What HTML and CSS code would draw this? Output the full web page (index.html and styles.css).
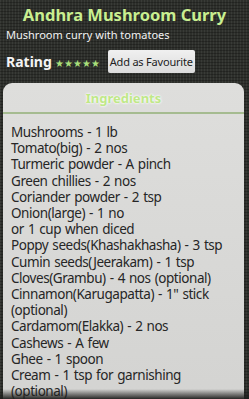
FILE: index.html
```html
<!DOCTYPE html>
<html>

<head>
    <title>Andhra Mushroom Curry</title>
    <link rel="stylesheet" href="styles.css">
</head>

<body>
    <h1 class="title">Andhra Mushroom Curry</h1>
    <div class="subtitle">Mushroom curry with tomatoes</div>

    <div class="rating-row">
        <span class="rating-label">Rating</span>
        <span class="stars">&#9733;&#9733;&#9733;&#9733;&#9733;</span>
        <button class="fav-btn">Add as Favourite</button>
    </div>

    <div class="panel">
        <div class="panel-head">Ingredients</div>
        <div class="ingredients">
            <div>Mushrooms - 1 lb</div>
            <div>Tomato(big) - 2 nos</div>
            <div>Turmeric powder - A pinch</div>
            <div>Green chillies - 2 nos</div>
            <div>Coriander powder - 2 tsp</div>
            <div>Onion(large) - 1 no<br>or 1 cup when diced</div>
            <div>Poppy seeds(Khashakhasha) - 3 tsp</div>
            <div>Cumin seeds(Jeerakam) - 1 tsp</div>
            <div>Cloves(Grambu) - 4 nos (optional)</div>
            <div>Cinnamon(Karugapatta) - 1" stick<br>(optional)</div>
            <div>Cardamom(Elakka) - 2 nos</div>
            <div>Cashews - A few</div>
            <div>Ghee - 1 spoon</div>
            <div>Cream - 1 tsp for garnishing<br>(optional)</div>
        </div>
    </div>

    <div class="bottom-fade"></div>
</body>

</html>
```

FILE: styles.css
```css
html, body {
    height: 100%;
    overflow: hidden;
}

body {
    margin: 0;
    font-family: "Noto Sans", "Open Sans", sans-serif;
    background-color: #2d2f2b;
    background-image:
        repeating-linear-gradient(0deg, rgba(0, 0, 0, 0.25) 0 1px, transparent 1px 3px),
        repeating-linear-gradient(90deg, rgba(255, 255, 255, 0.06) 0 1px, transparent 1px 3px);
}

.title {
    margin: 0;
    padding-top: 2px;
    height: 25px;
    font-size: 16.5px;
    font-weight: bold;
    color: #c9ef90;
    text-align: center;
    line-height: 25px;
}

.subtitle {
    padding-left: 6px;
    font-size: 11px;
    line-height: 16px;
    color: #f2f2f2;
}

.rating-row {
    display: flex;
    align-items: center;
    padding: 6px 0 0 6px;
    height: 24px;
}

.rating-label {
    font-size: 14px;
    font-weight: bold;
    color: #f4f4f4;
}

.stars {
    margin-left: 3px;
    margin-top: 3px;
    font-size: 10px;
    color: #a8df7a;
}

.fav-btn {
    margin-left: 8px;
    height: 23px;
    padding: 0 2px;
    border: none;
    border-radius: 2px;
    background: linear-gradient(#f0f0f0, #dcdcdc);
    font-family: "Noto Sans", sans-serif;
    font-size: 11px;
    letter-spacing: -0.2px;
    color: #222;
}

.panel {
    margin: 10px 5px 0 3px;
    border-radius: 9px 9px 0 0;
    background: linear-gradient(#dededc, #d3d3d1);
    height: 330px;
}

.panel-head {
    height: 29px;
    line-height: 31px;
    text-align: center;
    font-size: 13px;
    font-weight: bold;
    color: #bfe888;
    text-shadow: 0 0 2px #ffffff, 0 0 3px #ffffff;
    border-bottom: 2px solid #a5bb90;
}

.ingredients {
    padding: 10px 2px 0 8px;
    font-size: 13.5px;
    letter-spacing: -0.45px;
    word-spacing: 1px;
    line-height: 16.2px;
    white-space: nowrap;
    color: #262626;
}

.bottom-fade {
    position: absolute;
    left: 0;
    right: 0;
    bottom: 0;
    height: 10px;
    background: linear-gradient(rgba(30, 30, 28, 0), rgba(30, 30, 28, 0.95));
}
```
